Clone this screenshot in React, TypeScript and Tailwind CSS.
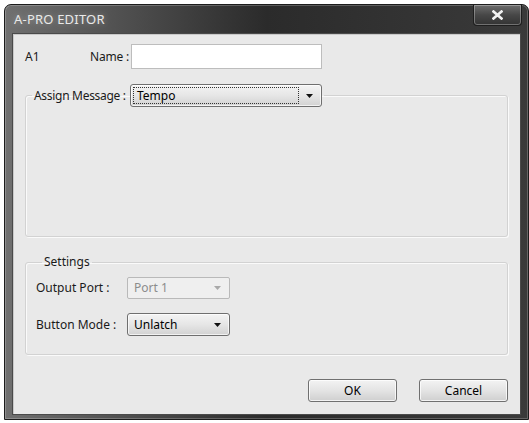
import type { ReactNode } from 'react'

const font = { fontFamily: '"Noto Sans", "Open Sans", Arial, sans-serif' }

function Arrow({ muted }: { muted?: boolean }) {
  return (
    <svg width="7" height="4" viewBox="0 0 7 4" className="shrink-0">
      <path d="M0 0h7L3.5 4z" fill={muted ? '#a9a9a9' : '#111'} />
    </svg>
  )
}

function Combo({
  value,
  width,
  focused,
  disabled,
}: {
  value: string
  width: string
  focused?: boolean
  disabled?: boolean
}) {
  if (disabled) {
    return (
      <div
        className={`flex h-[22px] ${width} items-center justify-between rounded-[2px] border border-[#b9b9b9] bg-[#efefef] pl-[6px] pr-[8px] text-[#8c8c8c]`}
      >
        <span>{value}</span>
        <Arrow muted />
      </div>
    )
  }
  return (
    <div
      className={`flex h-[23px] ${width} shrink-0 items-center rounded-[3px] border border-[#6f6f6f] bg-gradient-to-b from-[#f4f4f4] via-[#e6e6e6] to-[#d2d2d2] pr-[8px] text-black shadow-[inset_0_0_0_1px_rgba(255,255,255,0.7)]`}
    >
      <div
        className={`ml-[2px] flex h-[17px] flex-1 items-center pl-[3px] ${
          focused ? 'border border-dotted border-[#333]' : 'border border-transparent'
        }`}
      >
        {value}
      </div>
      <div className="ml-[7px]">
        <Arrow />
      </div>
    </div>
  )
}

function Group({ legend, children, className }: { legend: ReactNode; children?: ReactNode; className?: string }) {
  return (
    <fieldset
      className={`rounded-[3px] border border-[#d2d2d2] shadow-[inset_1px_1px_0_#fafafa,1px_1px_0_#fafafa] ${className ?? ''}`}
    >
      <legend className="ml-[6px] px-[2px]">{legend}</legend>
      {children}
    </fieldset>
  )
}

function PushButton({ label }: { label: string }) {
  return (
    <button className="h-[23px] w-[89px] rounded-[3px] border border-[#707070] bg-gradient-to-b from-[#f3f3f3] via-[#e4e4e4] to-[#cfcfcf] text-black shadow-[inset_0_0_0_1px_rgba(255,255,255,0.75)]">
      {label}
    </button>
  )
}

export default function App() {
  return (
    <div className="h-[423px] w-[529px] overflow-hidden bg-white pl-[4px] pt-[4px] text-[12px]" style={font}>
      <div className="flex h-[416px] w-[525px] flex-col rounded-t-[7px] border border-[#1c1c1c] bg-gradient-to-r from-[#707070] via-[#2b2b2b] to-[#3a3a3a] shadow-[inset_0_0_0_1px_rgba(255,255,255,0.22)]">
        {/* title bar */}
        <div className="flex h-[28px] items-start justify-between">
          <span className="mt-[8px] ml-[9px] text-[13px] leading-none tracking-[0.2px] text-[#e9e9e9] [text-shadow:0_0_6px_rgba(255,255,255,0.35)]">
            A-PRO EDITOR
          </span>
          <div className="mr-[6px] flex h-[21px] w-[49px] items-center justify-center rounded-b-[4px] border border-t-0 border-[#1e1e1e] bg-gradient-to-b from-[#6e6e6e] via-[#474747] to-[#333] shadow-[inset_0_0_0_1px_rgba(255,255,255,0.3)]">
            <svg width="11" height="10" viewBox="0 0 11 10">
              <path d="M1.5 1.5l8 7M9.5 1.5l-8 7" stroke="#f2f2f2" strokeWidth="2.6" strokeLinecap="square" />
            </svg>
          </div>
        </div>

        {/* client area */}
        <div className="mb-[4px] ml-[7px] mr-[7px] flex flex-1 flex-col border border-[#4a4a4a] bg-[#e9e9e9] px-[12px] pb-[12px] pt-[10px] text-[#1a1a1a] shadow-[inset_1px_1px_0_#c9c9c9]">
          <div className="flex h-[25px] items-center whitespace-nowrap">
            <span className="w-[60px]">A1</span>
            <span className="w-[44px] text-right tracking-[-0.2px]">Name :</span>
            <div className="ml-[2px] h-[25px] w-[191px] border border-[#bdbdbd] bg-white" />
          </div>

          <Group
            className="mt-[15px] h-[153px]"
            legend={
              <div className="flex items-center whitespace-nowrap">
                <span className="w-[96px] tracking-[-0.3px]">Assign Message :</span>
                <Combo value="Tempo" width="w-[192px]" focused />
              </div>
            }
          />

          <Group
            className="mt-[16px] px-[10px] pb-[18px]"
            legend={<span>Settings</span>}
          >
            <div className="mt-[6px] flex items-center whitespace-nowrap">
              <span className="w-[91px]">Output Port :</span>
              <Combo value="Port 1" width="w-[103px]" disabled />
            </div>
            <div className="mt-[14px] flex items-center whitespace-nowrap">
              <span className="w-[91px]">Button Mode :</span>
              <Combo value="Unlatch" width="w-[103px]" />
            </div>
          </Group>

          <div className="mt-auto flex justify-end gap-[22px]">
            <PushButton label="OK" />
            <PushButton label="Cancel" />
          </div>
        </div>
      </div>
    </div>
  )
}
